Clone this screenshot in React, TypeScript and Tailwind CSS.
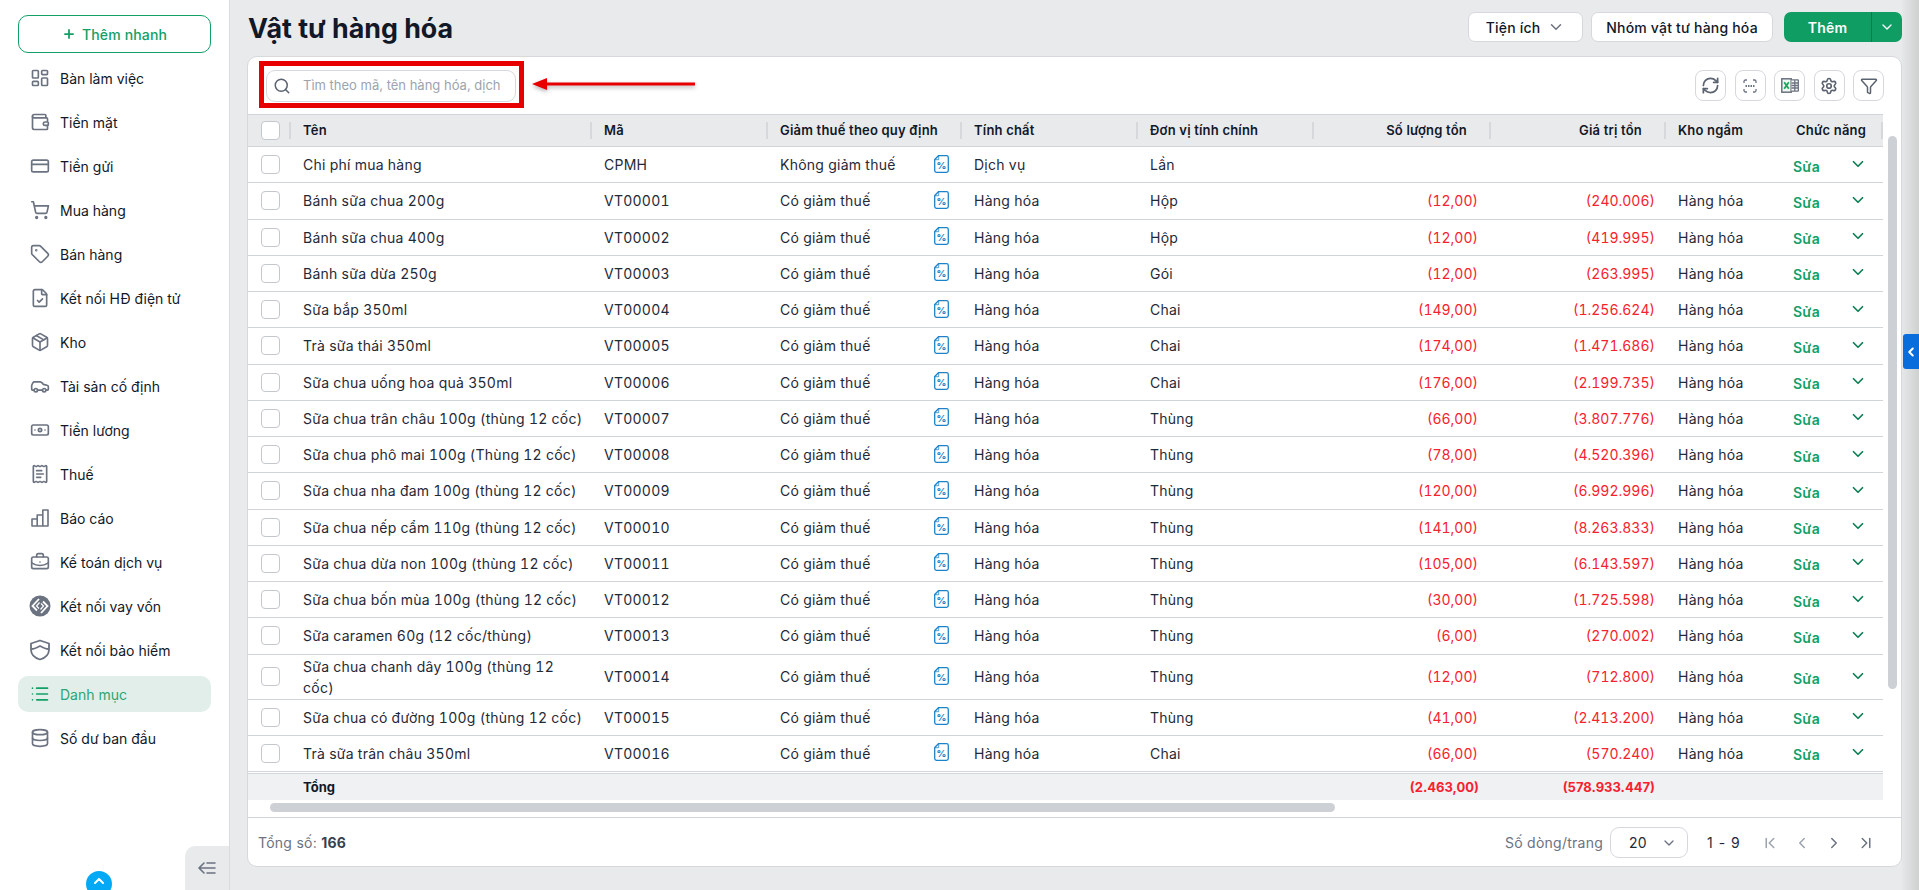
import React from "react";
import {
  Plus, LayoutDashboard, Wallet, CreditCard, ShoppingCart, Tag, FileCheck, Package, Car, Banknote, ReceiptText,
  BriefcaseBusiness, List, Database, ChevronUp, ChevronDown, ChevronLeft, ChevronRight, Search,
  RefreshCw, Settings, Funnel, ChevronFirst, ChevronLast,
} from "lucide-react";

const font = { fontFamily: "Inter, 'Noto Sans', sans-serif" };

function LoanIcon() {
  return (
    <svg width="22" height="22" viewBox="0 0 22 22" fill="none">
      <circle cx="11" cy="11" r="10.500" fill="#6b7280" />
      <path d="M10 4 3.500 11 8 15.500M12 18l6.500-7L14 6.500" stroke="#fff" strokeWidth="1.800" />
      <path d="M10.500 7.500 7.500 11l2.500 2.500M11.500 14.500l3-3.500L12 8.500" stroke="#fff" strokeWidth="1.200" />
    </svg>
  );
}
function ShieldIcon() {
  return (
    <svg width="22" height="22" viewBox="0 0 22 22" fill="none" stroke="#6b7280" strokeWidth="1.800" strokeLinejoin="round">
      <path d="M11 1.500 20 4.500v6c0 5-3.600 8.400-9 10-5.400-1.600-9-5-9-10v-6z" />
      <path d="M2.500 10c3 0 5-1 8.500-3 3.500 2 5.500 3 8.500 3" />
    </svg>
  );
}
function BarsIcon() {
  return (
    <svg width="20" height="20" viewBox="0 0 20 20" fill="none" stroke="#6b7280" strokeWidth="1.600" strokeLinejoin="round">
      <path d="M2 18v-7h5.200v7zM7.200 18V7h5.600v11zM12.800 18V2H18v16z" />
    </svg>
  );
}
function CollapseIcon() {
  return (
    <svg width="18" height="12" viewBox="0 0 18 12" fill="none" stroke="#6b7280" strokeWidth="1.600" strokeLinecap="round" strokeLinejoin="round">
      <path d="M6 1 1 6l5 5M1 6h16M9 1h8M9 11h8" />
    </svg>
  );
}
function PercentDoc() {
  return (
    <svg width="15" height="18" viewBox="0 0 15 18" fill="none" className="-mt-[2px]">
      <path d="M4.500 .7h8a1.800 1.800 0 0 1 1.800 1.800v13a1.800 1.800 0 0 1-1.800 1.800h-10A1.800 1.800 0 0 1 .7 15.500V4.500z" stroke="#1d83c9" strokeWidth="1.300" />
      <path d="M.9 4.700h3.800V.9" stroke="#1d83c9" strokeWidth=".8" />
      <text x="7.600" y="13.500" textAnchor="middle" fontSize="9.500" fontWeight="800" fill="#1d83c9" style={font}>%</text>
    </svg>
  );
}
function ScanIcon() {
  return (
    <svg width="14" height="14" viewBox="0 0 14 14" fill="none" stroke="#6b7280" strokeWidth="1.300">
      <path d="M1 4V2.500A1.500 1.500 0 0 1 2.500 1H4M10 1h1.500A1.500 1.500 0 0 1 13 2.500V4M13 10v1.500a1.500 1.500 0 0 1-1.500 1.500H10M4 13H2.500A1.500 1.500 0 0 1 1 11.500V10" />
      <path d="M2.500 7h9" strokeDasharray="1.500 1" strokeWidth="1.800" />
    </svg>
  );
}
function ExcelIcon() {
  return (
    <svg width="18" height="15" viewBox="0 0 18 15" fill="none">
      <rect x=".8" y=".8" width="9.400" height="13.400" fill="#eef7f1" stroke="#6b7280" strokeWidth="1.500" />
      <path d="M3.200 4.300 7.800 10.700M7.800 4.300 3.200 10.700" stroke="#12a95f" strokeWidth="1.800" />
      <path d="M10.500 2h7v11h-7" fill="#fff" />
      <path d="M10.500 1.800h7M10.500 5h7M10.500 7.500h7M10.500 10h7M10.500 13.200h7M13.800 1.800v11.400M17.300 1.800v11.400" stroke="#6b7280" strokeWidth="1.300" />
    </svg>
  );
}

const nav: [string, React.ReactNode][] = [
  ["Bàn làm việc", <LayoutDashboard size={20} />],
  ["Tiền mặt", <Wallet size={20} />],
  ["Tiền gửi", <CreditCard size={20} />],
  ["Mua hàng", <ShoppingCart size={20} />],
  ["Bán hàng", <Tag size={20} />],
  ["Kết nối HĐ điện tử", <FileCheck size={20} />],
  ["Kho", <Package size={20} />],
  ["Tài sản cố định", <Car size={20} />],
  ["Tiền lương", <Banknote size={20} />],
  ["Thuế", <ReceiptText size={20} />],
  ["Báo cáo", <BarsIcon />],
  ["Kế toán dịch vụ", <BriefcaseBusiness size={20} />],
  ["Kết nối vay vốn", <LoanIcon />],
  ["Kết nối bảo hiểm", <ShieldIcon />],
  ["Danh mục", <List size={20} />],
  ["Số dư ban đầu", <Database size={20} />],
];

const rows = [
  ["Chi phí mua hàng", "CPMH", "Không giảm thuế", "Dịch vụ", "Lần", "", "", ""],
  ["Bánh sữa chua 200g", "VT00001", "Có giảm thuế", "Hàng hóa", "Hộp", "(12,00)", "(240.006)", "Hàng hóa"],
  ["Bánh sữa chua 400g", "VT00002", "Có giảm thuế", "Hàng hóa", "Hộp", "(12,00)", "(419.995)", "Hàng hóa"],
  ["Bánh sữa dừa 250g", "VT00003", "Có giảm thuế", "Hàng hóa", "Gói", "(12,00)", "(263.995)", "Hàng hóa"],
  ["Sữa bắp 350ml", "VT00004", "Có giảm thuế", "Hàng hóa", "Chai", "(149,00)", "(1.256.624)", "Hàng hóa"],
  ["Trà sữa thái 350ml", "VT00005", "Có giảm thuế", "Hàng hóa", "Chai", "(174,00)", "(1.471.686)", "Hàng hóa"],
  ["Sữa chua uống hoa quả 350ml", "VT00006", "Có giảm thuế", "Hàng hóa", "Chai", "(176,00)", "(2.199.735)", "Hàng hóa"],
  ["Sữa chua trân châu 100g (thùng 12 cốc)", "VT00007", "Có giảm thuế", "Hàng hóa", "Thùng", "(66,00)", "(3.807.776)", "Hàng hóa"],
  ["Sữa chua phô mai 100g (Thùng 12 cốc)", "VT00008", "Có giảm thuế", "Hàng hóa", "Thùng", "(78,00)", "(4.520.396)", "Hàng hóa"],
  ["Sữa chua nha đam 100g (thùng 12 cốc)", "VT00009", "Có giảm thuế", "Hàng hóa", "Thùng", "(120,00)", "(6.992.996)", "Hàng hóa"],
  ["Sữa chua nếp cẩm 110g (thùng 12 cốc)", "VT00010", "Có giảm thuế", "Hàng hóa", "Thùng", "(141,00)", "(8.263.833)", "Hàng hóa"],
  ["Sữa chua dừa non 100g (thùng 12 cốc)", "VT00011", "Có giảm thuế", "Hàng hóa", "Thùng", "(105,00)", "(6.143.597)", "Hàng hóa"],
  ["Sữa chua bốn mùa 100g (thùng 12 cốc)", "VT00012", "Có giảm thuế", "Hàng hóa", "Thùng", "(30,00)", "(1.725.598)", "Hàng hóa"],
  ["Sữa caramen 60g (12 cốc/thùng)", "VT00013", "Có giảm thuế", "Hàng hóa", "Thùng", "(6,00)", "(270.002)", "Hàng hóa"],
  ["Sữa chua chanh dây 100g (thùng 12 cốc)", "VT00014", "Có giảm thuế", "Hàng hóa", "Thùng", "(12,00)", "(712.800)", "Hàng hóa"],
  ["Sữa chua có đường 100g (thùng 12 cốc)", "VT00015", "Có giảm thuế", "Hàng hóa", "Thùng", "(41,00)", "(2.413.200)", "Hàng hóa"],
  ["Trà sữa trân châu 350ml", "VT00016", "Có giảm thuế", "Hàng hóa", "Chai", "(66,00)", "(570.240)", "Hàng hóa"],
];

const cols = "grid grid-cols-[43px_301px_176px_194px_176px_176px_177px_175px_114px_103px]";
const Check = () => <span className="block w-[19px] h-[19px] rounded-[4px] border border-[#c4c7cc] bg-white" />;

function Th({ children, right, line = true }: { children?: React.ReactNode; right?: boolean; line?: boolean }) {
  return (
    <div className={`relative flex items-center whitespace-nowrap font-semibold text-[13px] tracking-[0.2px] text-[#111827] ${right ? "justify-end pr-[24px]" : "pl-[12px]"}`}>
      {children}
      {line && <span className="absolute right-0 top-[7px] h-[17px] w-[2px] bg-[#d6d8dc]" />}
    </div>
  );
}

export default function App() {
  return (
    <div style={font} className="flex h-[890px] w-[1919px] overflow-hidden bg-[#e9eaec] text-[14px] text-[#111827]">
      <aside className="relative w-[230px] shrink-0 h-full bg-white border-r border-[#d9dbdf] flex flex-col px-[18px] pt-[15px]">
        <button className="h-[38px] w-[193px] shrink-0 rounded-[10px] border border-[#12a066] flex items-center justify-center gap-[6px] text-[#12a066] font-medium tracking-[0.15px]">
          <Plus size={14} strokeWidth={3} />Thêm nhanh
        </button>
        <nav className="mt-[7px] flex flex-col w-[193px]">
          {nav.map(([label, icon]) => {
            const active = label === "Danh mục";
            return (
              <div key={label} className={`h-[36px] mb-[8px] shrink-0 flex items-center rounded-[10px] ${active ? "bg-[#e2eee9] text-[#2ba673]" : ""}`}>
                <span className="w-[42px] shrink-0 pl-[11px]">
                  <span className={`w-[22px] flex items-center justify-center ${active ? "text-[#12a066]" : "text-[#6b7280]"}`}>{icon}</span>
                </span>
                <span>{label}</span>
              </div>
            );
          })}
        </nav>
        <span className="absolute left-[86px] top-[871px] w-[26px] h-[26px] rounded-full bg-[#03a9f4] flex justify-center pt-[2px] text-white">
          <ChevronUp size={16} strokeWidth={3} />
        </span>
        <button className="absolute right-0 bottom-0 w-[44px] h-[44px] bg-[#e9eaec] rounded-tl-[10px] flex items-center justify-center">
          <CollapseIcon />
        </button>
      </aside>

      <main className="flex-1 min-w-0 pl-[17px] flex flex-col">
        <header className="h-[56px] shrink-0 flex items-start justify-between">
          <h1 className="ml-[1px] text-[26.800px] leading-[34px] mt-[11px] font-bold text-[#111827]">Vật tư hàng hóa</h1>
          <div className="flex mt-[12px] font-medium text-[#111827] tracking-[0.2px]">
            <button className="w-[115px] h-[30px] bg-white border border-[#d6d8dc] rounded-[7px] flex items-center justify-center gap-[7px]">
              Tiện ích <ChevronDown size={18} className="text-[#6b7280]" />
            </button>
            <button className="ml-[8px] w-[182px] h-[30px] bg-white border border-[#d6d8dc] rounded-[7px]">Nhóm vật tư hàng hóa</button>
            <div className="ml-[11px] w-[118px] h-[30px] bg-[#0f9d63] rounded-[7px] flex text-white font-semibold">
              <span className="w-[88px] flex items-center justify-center border-r border-[#0b7a4c]">Thêm</span>
              <span className="flex-1 flex items-center justify-center"><ChevronDown size={16} /></span>
            </div>
          </div>
        </header>

        <section className="relative h-[811px] bg-white rounded-[10px] border border-[#d6d8dc] flex flex-col overflow-hidden">
          <div className="h-[57px] shrink-0 flex items-center justify-between pr-[17px] pl-[18px]">
            <div className="w-[250px] h-[32px] rounded-[9px] border border-[#d6d8dc] flex items-center pl-[6px] text-[#9ca3af] text-[13px]">
              <Search size={18} className="text-[#5b6370] mr-[12px]" />
              <span className="whitespace-nowrap overflow-hidden">Tìm theo mã, tên hàng hóa, dịch</span>
            </div>
            <div className="flex gap-[8.500px] text-[#5b6370]">
              {[<RefreshCw size={19} strokeWidth={2.200} />, <ScanIcon />, <ExcelIcon />, <Settings size={18} strokeWidth={2.200} />, <Funnel size={18} />].map((ic, i) => (
                <span key={i} className="w-[31px] h-[31px] rounded-[8px] border border-[#d6d8dc] flex items-center justify-center">{ic}</span>
              ))}
            </div>
          </div>

          <div className="flex">
            <div className="w-[1635px] shrink-0 tracking-[0.25px] text-[#1f2937]">
              <div className={`${cols} h-[33px] bg-[#e9eaec] border-y border-[#d1d4d9]`}>
                <div className="relative flex items-center pl-[13px]"><Check /><span className="absolute right-0 top-[7px] h-[17px] w-[2px] bg-[#d6d8dc]" /></div>
                <Th>Tên</Th>
                <Th>Mã</Th>
                <Th>Giảm thuế theo quy định</Th>
                <Th>Tính chất</Th>
                <Th>Đơn vị tính chính</Th>
                <Th right>Số lượng tồn</Th>
                <Th right>Giá trị tồn</Th>
                <Th line={false}>Kho ngầm</Th>
                <Th><span className="pl-[4px]">Chức năng</span></Th>
              </div>
              {rows.map((r, i) => (
                <div key={r[1]} className={`${cols} ${i === 14 ? "h-[45px]" : "h-[36.250px]"} border-b border-[#d1d4d9] tabular-nums`}>
                  <div className="flex items-center pl-[13px]"><Check /></div>
                  <div className={`flex items-center pl-[12px] leading-[21px] ${i === 14 ? "pr-[12px]" : "whitespace-nowrap"}`}>{r[0]}</div>
                  <div className="flex items-center pl-[12px]">{r[1]}</div>
                  <div className="flex items-center justify-between pl-[12px] pr-[13px]"><span>{r[2]}</span><PercentDoc /></div>
                  <div className="flex items-center pl-[12px]">{r[3]}</div>
                  <div className="flex items-center pl-[12px]">{r[4]}</div>
                  <div className="flex items-center justify-end pr-[13px] text-[#f5222d] tracking-normal">{r[5]}</div>
                  <div className="flex items-center justify-end pr-[11px] text-[#f5222d] tracking-normal">{r[6]}</div>
                  <div className="flex items-center pl-[12px]">{r[7]}</div>
                  <div className="flex items-center pl-[13px]">
                    <span className="w-[56px] mt-[3px] font-semibold text-[#12a066]">Sửa</span>
                    <ChevronDown size={18} strokeWidth={2.300} className="-mt-[2px] text-[#0f7f55]" />
                  </div>
                </div>
              ))}
              <div className={`${cols} h-[27px] mt-[1px] pt-[2px] border-t border-[#d1d4d9] bg-[#f0f1f3] font-bold text-[13px] tracking-normal`}>
                <div />
                <div className="flex items-center pl-[12px] text-[#111827]">Tổng</div>
                <div /><div /><div /><div />
                <div className="flex items-center justify-end pr-[12px] text-[#f5222d]">(2.463,00)</div>
                <div className="flex items-center justify-end pr-[11px] text-[#f5222d]">(578.933.447)</div>
              </div>
            </div>
            <div className="ml-[5px] mt-[22px] w-[9px] h-[553px] rounded-full bg-[#cdd0d5]" />
          </div>

          <div className="ml-[22px] mt-[3px] w-[1065px] h-[9px] rounded-full bg-[#cdd0d5]" />

          <footer className="mt-auto h-[49px] pt-[1px] border-t border-[#d1d4d9] flex items-center justify-between pl-[10px] pr-[19px] tracking-[0.25px] text-[#6b7280]">
            <div>Tổng số: <span className="font-bold text-[#374151]">166</span></div>
            <div className="flex items-center">
              <span className="w-[105px]">Số dòng/trang</span>
              <span className="w-[78px] h-[31px] rounded-[9px] border border-[#d6d8dc] flex items-center justify-between pl-[18px] pr-[10px] text-[#1f2937]">
                20 <ChevronDown size={16} className="text-[#6b7280]" />
              </span>
              <span className="ml-[19px] w-[47px] text-[#1f2937] tracking-[1px]">1 - 9</span>
              {[<ChevronFirst size={18} className="text-[#9ca3af]" />, <ChevronLeft size={18} className="text-[#9ca3af]" />, <ChevronRight size={18} />, <ChevronLast size={18} />].map((ic, i) => (
                <span key={i} className="w-[32px] flex justify-center">{ic}</span>
              ))}
            </div>
          </footer>

          <div className="absolute left-[11px] top-[4px] w-[265px] h-[47px] border-[5px] border-[#e80000]" />
          <svg className="absolute left-[284px] top-[19px] drop-shadow-[0_2px_2px_rgba(0,0,0,0.3)]" width="165" height="16" viewBox="0 0 165 16">
            <path d="M0 8 15 2v4.500h148v3H15V14z" fill="#e80000" />
          </svg>
        </section>
      </main>

      <div className="relative w-[17px] shrink-0 h-full bg-gradient-to-r from-[#e6e7e8] to-[#cfd0d0]">
        <span className="absolute left-[1px] top-[334px] w-[16px] h-[35px] rounded-l-[3px] bg-[#0a6ddc] flex items-center justify-center text-white">
          <ChevronLeft size={14} strokeWidth={3.500} />
        </span>
      </div>
    </div>
  );
}
